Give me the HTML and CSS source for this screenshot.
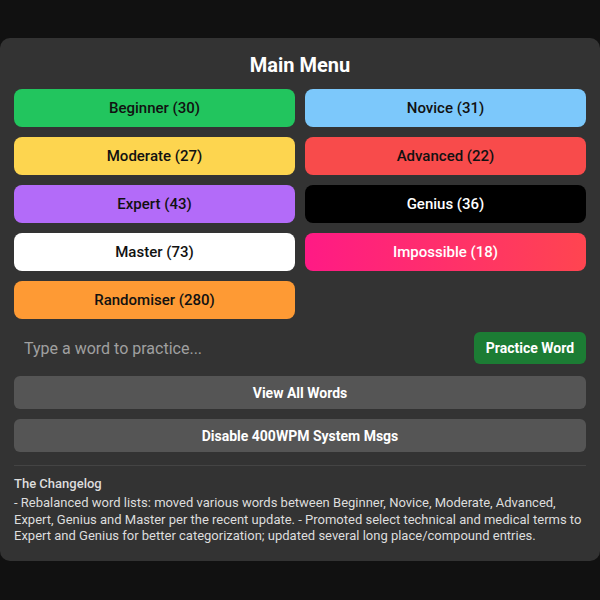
FILE: index.html
```html
<!DOCTYPE html>
<html>
<head>
<meta charset="utf-8">
<link rel="stylesheet" href="styles.css">
</head>
<body>
<div class="panel">
  <h1 class="title">Main Menu</h1>
  <div class="levels">
    <button class="lvl beginner">Beginner (30)</button>
    <button class="lvl novice">Novice (31)</button>
    <button class="lvl moderate">Moderate (27)</button>
    <button class="lvl advanced">Advanced (22)</button>
    <button class="lvl expert">Expert (43)</button>
    <button class="lvl genius">Genius (36)</button>
    <button class="lvl master">Master (73)</button>
    <button class="lvl impossible">Impossible (18)</button>
    <button class="lvl randomiser">Randomiser (280)</button>
  </div>
  <div class="practice">
    <input class="word-input" type="text" placeholder="Type a word to practice...">
    <button class="practice-btn">Practice Word</button>
  </div>
  <button class="wide-btn view-btn">View All Words</button>
  <button class="wide-btn">Disable 400WPM System Msgs</button>
  <div class="changelog">
    <div class="cl-title">The Changelog</div>
    <div class="cl-text">- Rebalanced word lists: moved various words between Beginner, Novice, Moderate, Advanced, Expert, Genius and Master per the recent update. - Promoted select technical and medical terms to Expert and Genius for better categorization; updated several long place/compound entries.</div>
  </div>
</div>
</body>
</html>
```
FILE: styles.css
```css
html, body {
  margin: 0;
  padding: 0;
  background: #111111;
  font-family: Roboto, "Liberation Sans", sans-serif;
}
body {
  padding-top: 38px;
  height: 600px;
  box-sizing: border-box;
}
.panel {
  width: 600px;
  box-sizing: border-box;
  background: #333333;
  border-radius: 10px;
  padding: 14px 14px 16px;
  display: flex;
  flex-direction: column;
}
.title {
  margin: 0 0 11px;
  font-size: 20px;
  line-height: 26px;
  font-weight: 700;
  color: #ffffff;
  text-align: center;
}
.levels {
  display: grid;
  grid-template-columns: 1fr 1fr;
  grid-auto-rows: 38px;
  gap: 10px;
}
.lvl {
  border: none;
  border-radius: 8px;
  font-family: inherit;
  font-size: 15px;
  font-weight: 500;
  color: #111111;
  padding: 0;
}
.beginner { background: #22c55e; }
.novice { background: #7cc8fb; }
.moderate { background: #fdd54f; }
.advanced { background: #f84b4b; }
.expert { background: #b36bf9; }
.genius { background: #000000; color: #ffffff; }
.master { background: #ffffff; }
.impossible { background: linear-gradient(90deg, #ff1a85, #ff4550); color: #ffffff; }
.randomiser { background: #fe9a34; }
.practice {
  display: flex;
  align-items: center;
  gap: 10px;
  margin-top: 12px;
  height: 34px;
}
.word-input {
  flex: 1;
  height: 34px;
  border: none;
  background: transparent;
  padding: 0 10px;
  font-family: inherit;
  font-size: 16px;
  color: #eeeeee;
  outline: none;
}
.word-input::placeholder {
  color: #a0a0a0;
}
.practice-btn {
  height: 32px;
  width: 112px;
  border: none;
  border-radius: 6px;
  background: #1c7c34;
  color: #ffffff;
  font-family: inherit;
  font-size: 14px;
  font-weight: 700;
  padding: 0;
}
.wide-btn {
  height: 33px;
  margin-top: 10px;
  border: none;
  border-radius: 6px;
  background: #555555;
  color: #ffffff;
  font-family: inherit;
  font-size: 14px;
  font-weight: 700;
  padding: 0;
}
.view-btn {
  margin-top: 11px;
}
.changelog {
  margin-top: 13px;
  border-top: 1px solid #444444;
  padding-top: 10px;
  color: #dddddd;
  font-size: 13px;
  line-height: 16.5px;
}
.cl-title {
  font-weight: 500;
  margin-bottom: 2.5px;
}
```
